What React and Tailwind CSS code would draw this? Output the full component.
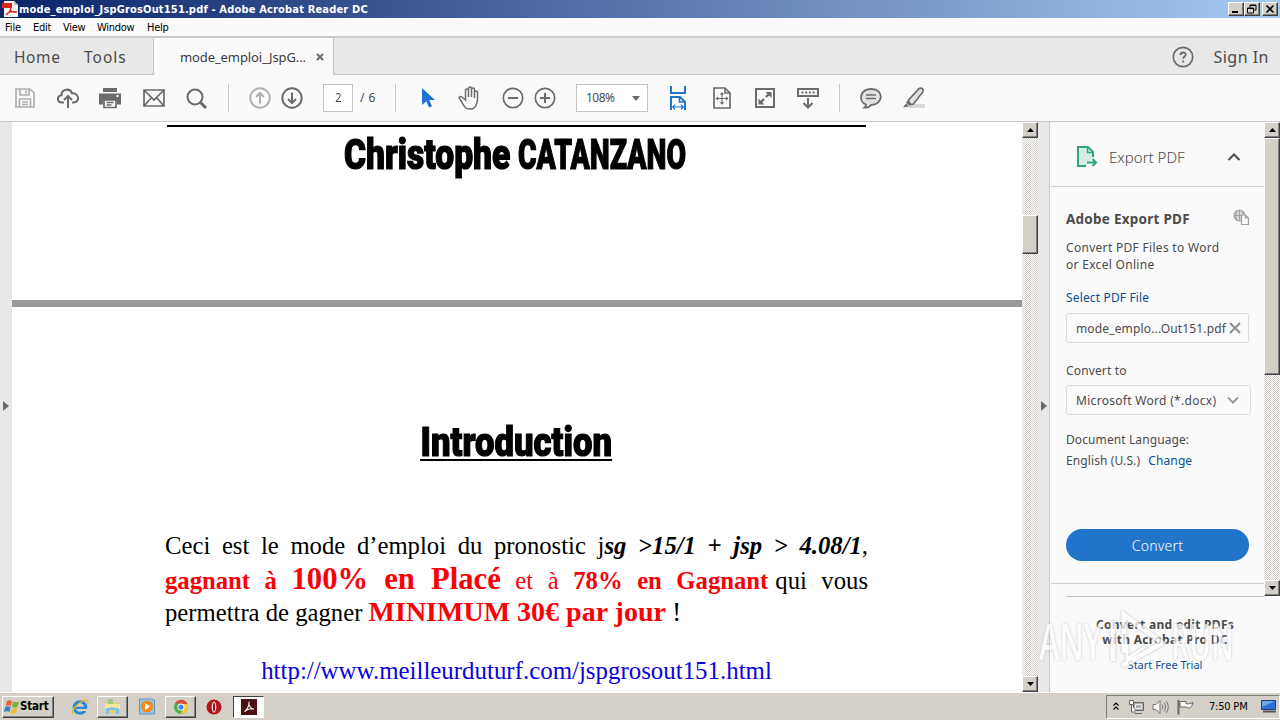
import React from 'react';
import clsx from 'clsx';

const ACROBAT_RED = '#d8281c';

const Icon = ({ w = 24, h = 24, className, children }) => (
  <svg
    width={w}
    height={h}
    viewBox={`0 0 ${w} ${h}`}
    fill="none"
    stroke="#6b6b6b"
    strokeWidth="2"
    className={clsx('shrink-0', className)}
  >
    {children}
  </svg>
);

const bevel =
  'bg-[#d4d0c8] border border-t-white border-l-white border-r-[#404040] border-b-[#404040] shadow-[inset_-1px_-1px_0_#808080]';

const track =
  'bg-[repeating-conic-gradient(#ffffff_0_25%,#d4d0c8_0_50%)] bg-[length:2px_2px]';

const WinButton = ({ children, className }) => (
  <div className={clsx('h-[14px] w-4 flex items-center justify-center', bevel, className)}>
    <svg width="12" height="10" viewBox="0 0 12 10" fill="none" stroke="#000" strokeWidth="1">
      {children}
    </svg>
  </div>
);

const TitleBar = () => (
  <div className="h-[18px] flex items-center pl-[2px] pr-[2px] bg-[linear-gradient(90deg,#0a246a,#a6caf0)]">
    <svg width="16" height="16" viewBox="0 0 16 16" className="shrink-0">
      <path d="M2 0h10l4 4v12H2z" fill="#f4f4f4" />
      <path d="M12 0v4h4z" fill="#bbb" />
      <path d="M0 2h10v5H0z" fill={ACROBAT_RED} />
      <path d="M4 14c3-2 5-6 5-9M8 8c1 3 4 4 7 3M4 14c2-3 6-4 11-3" stroke={ACROBAT_RED} strokeWidth="1.3" fill="none" />
    </svg>
    <span className="ml-[1px] mt-px whitespace-nowrap text-[11px] leading-[18px] tracking-[0.170px] font-bold text-white font-['DejaVu_Sans_Condensed','DejaVu_Sans',sans-serif]">
      mode_emploi_JspGrosOut151.pdf - Adobe Acrobat Reader DC
    </span>
    <div className="ml-auto flex">
      <WinButton>
        <path d="M2 8h6" strokeWidth="2" />
      </WinButton>
      <WinButton>
        <path d="M4 3.500V1h6v5H8M4 1.500h6M1.500 4h6v5h-6zM1.500 4.500h6" />
      </WinButton>
      <WinButton className="ml-[2px]">
        <path d="M2.500 1.500l7 7M9.500 1.500l-7 7" strokeWidth="1.600" />
      </WinButton>
    </div>
  </div>
);

const MenuBar = () => (
  <div className="h-5 flex items-center pl-[5px] pt-[3px] gap-[12px] bg-[#fafafa] border-b-2 border-[#cbcbcb] text-[11px] text-black font-['DejaVu_Sans_Condensed','DejaVu_Sans',sans-serif]">
    <span className="w-4 tracking-[-0.1px]">File</span>
    <span className="w-[18px] tracking-[-0.3px]">Edit</span>
    <span className="w-[22px] tracking-[-0.3px]">View</span>
    <span className="w-[38px] tracking-[-0.3px]">Window</span>
    <span className="tracking-[-0.3px]">Help</span>
  </div>
);

const TabBar = () => (
  <div className="h-[37px] flex bg-[#e8e8e8] text-[#4b4b4b] font-['Noto_Sans',sans-serif]">
    <div className="w-[154px] flex items-center pl-[14px] pt-[3px] border-b border-r border-[#c4c4c4] text-[15.500px]">
      <span className="w-[70px] tracking-[0.600px]">Home</span>
      <span className="tracking-[1px]">Tools</span>
    </div>
    <div className="w-[179px] flex items-center pl-[26px] bg-[#fafafa]">
      <span className="w-[136px] pt-[2px] text-[13px] tracking-[-0.1px] whitespace-nowrap text-[#3a3a3a]">mode_emploi_JspG...</span>
      <Icon w={8} h={8}>
        <path d="M1 1l6 6M7 1L1 7" />
      </Icon>
    </div>
    <div className="flex-1 flex items-center justify-end pr-[11px] border-b border-l border-[#c4c4c4]">
      <Icon w={22} h={22} className="mt-px">
        <circle cx="11" cy="11" r="9.700" strokeWidth="1.700" />
        <path d="M8.500 9c0-3.300 5.200-3.300 5.200-.3 0 1.800-2.500 1.800-2.500 4M11.200 14.500v2" strokeWidth="1.800" />
      </Icon>
      <span className="ml-[19px] mt-px text-[16px] tracking-[0.5px]">Sign In</span>
    </div>
  </div>
);

const Toolbar = () => (
  <div className="h-[47px] flex items-center bg-[#fafafa] border-b border-[#c8c8c8] font-['Noto_Sans',sans-serif] text-[#4b4b4b]">
    <Icon w={22} h={22} className="ml-[14px]">
      <g stroke="#b0b0b0" strokeWidth="1.700">
        <path d="M2 2h14l4 4v14H2z" />
        <path d="M6 2v6h9V2M12 3.500v3M5.500 20v-8h11v8M8 15h6M8 17.500h6" />
      </g>
    </Icon>
    <Icon w={24} h={24} className="ml-5">
      <path d="M8 16.500H6C.8 16.500.6 9.800 5.500 9.300 5.500 3 14 1.500 16 7.300c7-.7 8.500 9.200 1.500 9.200H16" strokeWidth="2" />
      <path d="M12 22V10.500M8 14l4-4 4 4" strokeWidth="2" />
    </Icon>
    <Icon w={24} h={24} className="ml-[18px]">
      <path d="M5 2h14v4H5z" fill="#6b6b6b" stroke="none" />
      <path d="M1 7.500h22v11h-4v-4H5v4H1z" fill="#6b6b6b" stroke="none" />
      <path d="M6 14h12v7.500H6z" fill="#fafafa" strokeWidth="1.700" />
      <path d="M8.500 16.500h7M8.500 19h5" strokeWidth="1.500" />
      <path d="M18.500 10h2" stroke="#fafafa" />
    </Icon>
    <Icon w={24} h={24} className="ml-5">
      <path d="M2 4h20v16H2zM2.500 4.500L12 14l9.500-9.500M2.500 19.500l7-8M21.500 19.500l-7-8" strokeWidth="1.700" />
    </Icon>
    <Icon w={24} h={24} className="ml-[18px]">
      <circle cx="11" cy="11" r="7.500" strokeWidth="2" />
      <path d="M16.500 16.500l5.500 5.500" strokeWidth="3" />
    </Icon>
    <div className="ml-[20px] w-px h-7 bg-[#c8c8c8]" />
    <Icon w={22} h={22} className="ml-[20px]">
      <g stroke="#b0b0b0">
        <circle cx="11" cy="11" r="9.700" />
        <path d="M11 16.500V6M7 10l4-4 4 4" />
      </g>
    </Icon>
    <Icon w={22} h={22} className="ml-[10px]">
      <circle cx="11" cy="11" r="9.700" />
      <path d="M11 5.500V16M7 12l4 4 4-4" />
    </Icon>
    <div className="ml-5 w-[30px] h-7 border border-[#c4c4c4] bg-white text-[12px] flex items-center justify-center">
      <span className="scale-x-90">2</span>
    </div>
    <span className="ml-[7px] w-[35px] text-[12px] tracking-[0.5px]">/ 6</span>
    <div className="w-px h-7 bg-[#c8c8c8]" />
    <Icon w={16} h={22} className="ml-[25px]">
      <path d="M1 1v17l4.300-3.700L8 20.500l3-1.300L8.300 13H14z" fill="#2074d0" stroke="none" />
    </Icon>
    <Icon w={24} h={26} className="ml-[21px]">
      <path
        d="M7.500 15V5.500c0-2 3-2 3 0V12 3.500c0-2 3-2 3 0V12 4.500c0-2 3-2 3 0V13 7.500c0-2 3-2 3 0 0 3 .5 6.500-.5 10-1.200 5-3 6.500-7 6.500-4.500 0-5.500-2-8-6.500l-2.500-4c-.8-1.800 1.500-2.700 2.500-1.500z"
        strokeWidth="1.500"
      />
    </Icon>
    <Icon w={22} h={22} className="ml-5">
      <circle cx="11" cy="11" r="9.700" strokeWidth="1.700" />
      <path d="M6 11h10" />
    </Icon>
    <Icon w={22} h={22} className="ml-[10px]">
      <circle cx="11" cy="11" r="9.700" strokeWidth="1.700" />
      <path d="M6 11h10M11 6v10" />
    </Icon>
    <div className="ml-[20px] w-[72px] h-7 border border-[#c4c4c4] bg-white text-[12px] flex items-center pl-[9px]">
      <span className="w-[46px] tracking-[-0.5px]">108%</span>
      <svg width="8" height="5" viewBox="0 0 8 5">
        <path d="M0 0h8L4 5z" fill="#6b6b6b" />
      </svg>
    </div>
    <Icon w={20} h={26} className="ml-[20px]">
      <g stroke="#2074d0">
        <path d="M3 1v7h14V1M3 25V12h9l5 5v8" />
        <path d="M11.500 12v5H17" strokeWidth="1.500" />
        <path d="M5 22h10M7 19.700L4.700 22 7 24.300M13 19.700l2.300 2.300-2.300 2.300" strokeWidth="1.200" />
      </g>
    </Icon>
    <Icon w={20} h={22} className="ml-[24px]">
      <path d="M2 1h11l5 5v15H2zM13 1v5h5" strokeWidth="1.700" />
      <path d="M10 6v11M4.500 11.500h11M8.500 7.500L10 6l1.500 1.500M8.500 15.500L10 17l1.500-1.500M6 10l-1.500 1.500L6 13M14 10l1.500 1.500L14 13" strokeWidth="1.100" />
    </Icon>
    <Icon w={22} h={22} className="ml-[22px]">
      <path d="M2 2h18v18H2z" />
      <path d="M11.500 5h6v6zM4.500 11.500v6h6z" fill="#6b6b6b" stroke="none" />
      <path d="M12 10l4-4M6 16l4-4" strokeWidth="2.300" />
    </Icon>
    <Icon w={24} h={24} className="ml-[20px]">
      <path d="M2 3h20v7H2z" />
      <path d="M5.500 6.500h13.500" strokeDasharray="2 1.700" />
      <path d="M12 12v9M7.500 17l4.500 4.500 4.500-4.500" />
    </Icon>
    <div className="ml-[19px] w-px h-7 bg-[#c8c8c8]" />
    <Icon w={24} h={24} className="ml-[19px]">
      <path d="M7 18.500C-1.500 15 1 3 12.500 3 25 3 25 18.500 12 19c-1.500 2.200-4 2.800-6.500 2.500 1.300-1 1.500-2 1.500-3z" fill="#e2e2e2" strokeWidth="1.800" />
      <path d="M7 9h10M7 12.500h10" strokeWidth="1.500" />
    </Icon>
    <Icon w={24} h={24} className="ml-[19px]">
      <path d="M7 18h16v4H7z" fill="#d8d8d8" stroke="none" />
      <path d="M6.500 14L17 2.700c2-1.700 5 .3 4 3L11.500 18l-3.500.5z" fill="#e2e2e2" strokeWidth="1.700" />
      <path d="M5.500 14.500l4.500 4-3 1-3-3zM1 21.500L4 17.500l3 3z" fill="#6b6b6b" stroke="none" />
    </Icon>
  </div>
);

const ArrowButton = ({ down }) => (
  <div className={clsx('h-4 w-4 shrink-0 flex items-center justify-center', bevel)}>
    <svg width="7" height="4" viewBox="0 0 7 4">
      <path d={down ? 'M0 0h7L3.500 4z' : 'M0 4h7L3.500 0z'} fill="#000" />
    </svg>
  </div>
);

const Doc = () => (
  <div className="w-[1010px] h-full overflow-hidden bg-white text-black">
    <div className="mt-[3px] ml-[155px] w-[699px] h-[2px] bg-black" />
    <h1 className="h-[173px] pt-[4px] pl-[332px] flex text-[42px] leading-[48px] font-black whitespace-nowrap font-['Roboto',sans-serif] [-webkit-text-stroke:1.200px_#000]">
      <span className="w-[174px]">
        <span className="inline-block origin-left scale-x-[0.8]">Christophe</span>
      </span>
      <span className="w-[170px]">
        <span className="inline-block origin-left scale-x-[0.675]">CATANZANO</span>
      </span>
    </h1>
    <div className="h-[7px] bg-[#999999]" />
    <div className="h-[223px] pt-[111px] pr-[2px] flex flex-col items-center font-['Roboto',sans-serif]">
      <h1 className="text-[41px] leading-[48px] font-black whitespace-nowrap scale-x-[0.845] [-webkit-text-stroke:1.200px_#000]">
        Introduction
      </h1>
      <div className="-mt-[7px] w-[192px] h-[2px] shrink-0 bg-black" />
    </div>
    <div className="ml-[153px] w-[703px] text-[24.700px] whitespace-nowrap font-['Liberation_Serif',serif]">
      <p className="h-[32px] leading-[32px] [text-align-last:justify] whitespace-normal">
        Ceci est le mode d’emploi du pronostic j
        <b className="italic">sg &gt;15/1 + jsp &gt; 4.08/1</b>,
      </p>
      <p className="h-[34px] leading-[35px] [text-align-last:justify] whitespace-normal text-[#fb0007]">
        <b>gagnant à </b>
        <b className="text-[30.700px]">100% en Placé</b> et à <b>78% en Gagnant</b>
        <span className="ml-[7px] text-black">qui vous</span>
      </p>
      <p className="h-[32px] leading-[31px]">
        permettra de gagner <b className="text-[28px] text-[#fb0007]">MINIMUM 30€ par jour</b>{' '}
        <span className="text-[27.900px]">!</span>
      </p>
      <p className="mt-[26px] leading-[34px] text-center text-[24.900px] text-[#0a00e0]">
        http://www.meilleurduturf.com/jspgrosout151.html
      </p>
    </div>
  </div>
);

const ExportPanel = () => (
  <div className="w-[213px] h-[462px] border-b border-[#d0d0d0] flex flex-col">
    <div className="h-[65px] shrink-0 flex items-center pl-[25px] pt-[6px] border-b border-[#d0d0d0]">
      <Icon w={22} h={22}>
        <g stroke="#2fa77c">
          <path d="M10 20H2V1h10l5 5v5" fill="#d7ece4" />
          <path d="M11.500 1v5.500H17" strokeWidth="1.500" />
          <path d="M11 16.500h9M16.500 13l3.500 3.500-3.500 3.500" />
        </g>
      </Icon>
      <span className="ml-[11px] w-[118px] text-[15px] font-light">Export PDF</span>
      <Icon w={14} h={10}>
        <path d="M1.500 8L7 2.500 12.500 8" stroke="#4b4b4b" />
      </Icon>
    </div>
    <div className="pl-[15px] text-[12px] leading-[17px] flex flex-col">
      <div className="mt-[22px] h-[20px] flex items-center">
        <span className="w-[167px] text-[13.500px] font-bold tracking-[0.250px]">Adobe Export PDF</span>
        <Icon w={17} h={17} className="-mt-[4px]">
          <g stroke="#a0a0a0" strokeWidth="1.200">
            <circle cx="6.500" cy="6.500" r="5.500" fill="#e0e0e0" />
            <path d="M1 6.500h11M6.500 1v11M4 2c-1.500 3-1.500 6 0 9M9 2c1.500 3 1.500 6 0 9" />
            <path d="M8.500 6h4l3 3v6.500h-7zM12.500 6v3h3" fill="#fafafa" />
          </g>
        </Icon>
      </div>
      <p className="mt-[10px] tracking-[0.3px]">
        Convert PDF Files to Word
        <br />
        or Excel Online
      </p>
      <a className="mt-[16px] tracking-[0.150px] text-[#0b4f93]">Select PDF File</a>
      <div className="mt-[7px] w-[183px] h-[30px] flex items-center pl-[9px] rounded-[3px] border border-[#dcdcdc]">
        <span className="w-[153px] tracking-[0.150px]">mode_emplo...Out151.pdf</span>
        <Icon w={12} h={12}>
          <path d="M1 1l10 10M11 1L1 11" stroke="#8e8e8e" />
        </Icon>
      </div>
      <span className="mt-[19px] tracking-[0.150px]">Convert to</span>
      <div className="mt-[6px] w-[185px] h-[30px] flex items-center pl-[9px] rounded-[3px] border border-[#dcdcdc]">
        <span className="w-[151px] pt-px tracking-[0.300px]">Microsoft Word (*.docx)</span>
        <Icon w={12} h={8}>
          <path d="M1 1.500L6 6.500 11 1.500" stroke="#9a9a9a" />
        </Icon>
      </div>
      <span className="mt-[16px] tracking-[0.100px]">Document Language:</span>
      <span className="mt-[4px] tracking-[0.100px]">
        English (U.S.) <a className="ml-[5px] text-[#0b4f93]">Change</a>
      </span>
      <div className="mt-[60px] w-[183px] h-8 rounded-full bg-[#2074ca] text-white text-[14px] tracking-[0.200px] font-light flex items-center justify-center">
        Convert
      </div>
    </div>
  </div>
);

const Watermark = () => (
  <div className="absolute left-[1039px] top-[608px] w-[200px] h-[66px] flex items-center justify-between text-[50px] text-white opacity-75 [text-shadow:0_0_3px_#b0b0b0] font-['Open_Sans',sans-serif]">
    <span className="w-[68px]">
      <span className="block origin-left scale-x-[0.62] font-semibold">ANY</span>
    </span>
    <svg width="60" height="64" viewBox="0 0 60 64" fill="none" stroke="#fff" strokeWidth="5" className="drop-shadow-[0_0_1px_#a0a0a0]">
      <path d="M4 12v40M15 44V6l38 28-40 23" />
      <path d="M18 36v14l18-12" strokeWidth="3" />
    </svg>
    <span className="w-[68px]">
      <span className="block origin-left scale-x-[0.58] font-semibold">RUN</span>
    </span>
  </div>
);

const TaskButton = ({ active, children }) => (
  <div
    className={clsx(
      'h-[22px] w-[31px] flex items-center justify-center',
      active ? 'bg-white border border-t-[#404040] border-l-[#404040] border-r-white border-b-white' : bevel
    )}
  >
    {children}
  </div>
);

const TaskBar = () => (
  <div className="h-[28px] flex items-center bg-[#d4d0c8] border-t border-white pl-[2px] text-black font-['DejaVu_Sans_Condensed','DejaVu_Sans',sans-serif]">
    <div className={clsx('h-[22px] w-[52px] flex items-center pl-[1px]', bevel)}>
      <svg width="16" height="16" viewBox="0 0 16 16" className="shrink-0">
        <path d="M3 2c2-1 3-1 5 0L7 7C5 6 3.500 6 1.500 7z" fill="#e8622c" />
        <path d="M9 2.500c2 1 3.500 1 6 0L13.500 8c-2 1-3.500 1-5.500 0z" fill="#6fb53c" />
        <path d="M1.200 8c2-1 3.500-1 5.500 0l-1.200 5c-2-1-3.500-1-5.500 0z" fill="#3e7fd0" />
        <path d="M7.800 9c2 1 3.500 1 5.500 0L12 14c-2 1-3.500 1-5.500 0z" fill="#f2c02c" />
      </svg>
      <span className="pt-px text-[11.500px] font-bold tracking-[-0.200px]">Start</span>
    </div>
    <svg width="18" height="18" viewBox="0 0 18 18" fill="none" className="ml-[17px]">
      <circle cx="9" cy="9.500" r="5.800" stroke="#2b87d8" strokeWidth="3" />
      <path d="M5 9.800h10" stroke="#2b87d8" strokeWidth="2.200" />
      <path d="M11 12h6" stroke="#d4d0c8" strokeWidth="2" />
      <path d="M2 16C-1 12 12 0 16.500 2.500c1 .7.500 2-.3 3.200" stroke="#e7b52c" strokeWidth="1.300" />
    </svg>
    <div className="ml-[8px]">
      <TaskButton>
        <svg width="17" height="17" viewBox="0 0 17 17">
          <path d="M1 3h6l1 2h8v10H1z" fill="#efce6a" />
          <path d="M4 1h5v5H4z" fill="#9fc88a" />
          <path d="M1 6h15v5H1z" fill="#f8e7a2" />
          <path d="M2 16v-5c0-2 13-2 13 0v5h-3v-4H5v4z" fill="#7fc0e6" />
        </svg>
      </TaskButton>
    </div>
    <svg width="16" height="17" viewBox="0 0 16 17" className="ml-[11px]">
      <path d="M.5 1h12l3 1v14H.5z" fill="#9cc4e4" stroke="#5d97c8" />
      <circle cx="8" cy="8.500" r="6" fill="#f08a1c" />
      <path d="M6 5v7l5-3.500z" fill="#fff" />
    </svg>
    <div className="ml-[10px]">
      <TaskButton>
        <svg width="16" height="16" viewBox="0 0 16 16">
          <circle cx="8" cy="8" r="7" fill="#4bae50" />
          <path d="M2 4.300A7 7 0 0 1 14.500 5H8z" fill="#dd4b3e" />
          <path d="M14.500 5A7 7 0 0 1 7.500 15L11 8 8 5z" fill="#f5c934" />
          <circle cx="8" cy="8" r="3.500" fill="#fff" />
          <circle cx="8" cy="8" r="2.600" fill="#4285f4" />
        </svg>
      </TaskButton>
    </div>
    <svg width="16" height="16" viewBox="0 0 16 16" className="ml-[10px]">
      <circle cx="8" cy="8" r="7.500" fill="#b3171c" />
      <ellipse cx="8" cy="8" rx="2.300" ry="5.500" fill="#f4e4e2" />
      <ellipse cx="8" cy="8" rx="1" ry="4.500" fill="#8d1014" />
    </svg>
    <div className="ml-[11px]">
      <TaskButton active>
        <svg width="16" height="16" viewBox="0 0 16 16" fill="none">
          <path d="M0 0h16v16H0z" fill="#4a1214" />
          <path d="M3.500 12.500c2-1 5-6 4.500-9-1 2 1.500 6.500 5 6.800-3-1-7 0-9.500 2.200z" stroke="#fff" strokeWidth="1.100" />
        </svg>
      </TaskButton>
    </div>
    <div className="ml-auto h-[24px] w-[174px] flex items-center pl-[6px] border border-t-[#808080] border-l-[#808080] border-r-white border-b-white">
      <svg width="6" height="9" viewBox="0 0 6 9" fill="none" stroke="#000" strokeWidth="1.200">
        <path d="M.5 3.500L3 1l2.500 2.500M.5 7.500L3 5l2.500 2.500" />
      </svg>
      <svg width="17" height="16" viewBox="0 0 17 16" fill="none" stroke="#666" className="ml-[9px]">
        <path d="M5.500 3.500h10v8h-10z" fill="#aaa" />
        <path d="M7.500 5.500h6v4h-6z" stroke="#eee" />
        <path d="M1.500 1.500h4v4h-4zM3.500 5v8h4M7 14.500h7" fill="#f4f4f4" />
      </svg>
      <svg width="17" height="16" viewBox="0 0 17 16" fill="none" stroke="#777" className="ml-[7px]">
        <path d="M1 5.500h3l4-4v13l-4-4H1z" fill="#f6f6f6" />
        <path d="M10 5.500c1 1.500 1 3.500 0 5M12 3.500c2 3 2 6 0 9M14 2c3 4 3 8 0 12" />
      </svg>
      <svg width="17" height="16" viewBox="0 0 17 16" fill="none" stroke="#666" className="ml-[8px]">
        <path d="M1.500 1v14.500" strokeWidth="2" />
        <path d="M3 2.500h6v2c2 1 4 0 7-1-1 2-1 4-2.500 5-2 1-3 .5-4.500-.5H3z" fill="#f6f6f6" />
      </svg>
      <span className="ml-[15px] w-[52px] pt-[2px] text-[11px] tracking-[-0.200px] whitespace-nowrap">7:50 PM</span>
      <svg width="16" height="15" viewBox="0 0 16 15">
        <path d="M.5 1.500h14v9H.5z" fill="#2d6fd0" stroke="#1c3f80" />
        <path d="M1 2h13L1 8z" fill="#6ea5ea" />
        <path d="M2 12.500h13" stroke="#555" strokeWidth="2" />
      </svg>
    </div>
  </div>
);

const App = () => {
  return (
    <div className="relative w-[1280px] h-[720px] overflow-hidden flex flex-col bg-[#fafafa]">
      <TitleBar />
      <MenuBar />
      <TabBar />
      <Toolbar />
      <div className="h-[570px] flex bg-[#e8e8e8]">
        <div className="w-3 flex items-center pl-[3px] pb-[2px]">
          <svg width="6" height="10" viewBox="0 0 6 10">
            <path d="M0 0v10l6-5z" fill="#6b6b6b" />
          </svg>
        </div>
        <Doc />
        <div className={clsx('w-4 flex flex-col', track)}>
          <ArrowButton />
          <div className={clsx('mt-[77px] h-[39px]', bevel)} />
          <div className="mt-auto">
            <ArrowButton down />
          </div>
        </div>
        <div className="w-3 flex items-center pl-[3px] pb-[2px] border-r border-[#c8c8c8]">
          <svg width="6" height="10" viewBox="0 0 6 10">
            <path d="M0 0v10l6-5z" fill="#6b6b6b" />
          </svg>
        </div>
        <div className="flex-1 bg-[#fafafa] text-[#4b4b4b] font-['Noto_Sans',sans-serif]">
          <div className="flex pl-px h-[474px]">
            <ExportPanel />
            <div className={clsx('w-4 flex flex-col', track)}>
              <ArrowButton />
              <div className={clsx('h-[237px]', bevel)} />
              <div className="mt-auto">
                <ArrowButton down />
              </div>
            </div>
          </div>
          <div className="ml-4 w-[198px] h-px bg-[#c4c4c4]" />
          <div className="flex flex-col items-center text-center text-[12px] leading-[15px]">
            <p className="mt-[20px] font-bold tracking-[0.3px]">
              Convert and edit PDFs
              <br />
              with Acrobat Pro DC
            </p>
            <a className="mt-[10px] text-[11px] text-[#0b4f93]">Start Free Trial</a>
          </div>
        </div>
      </div>
      <TaskBar />
      <Watermark />
    </div>
  );
};

export default App;
